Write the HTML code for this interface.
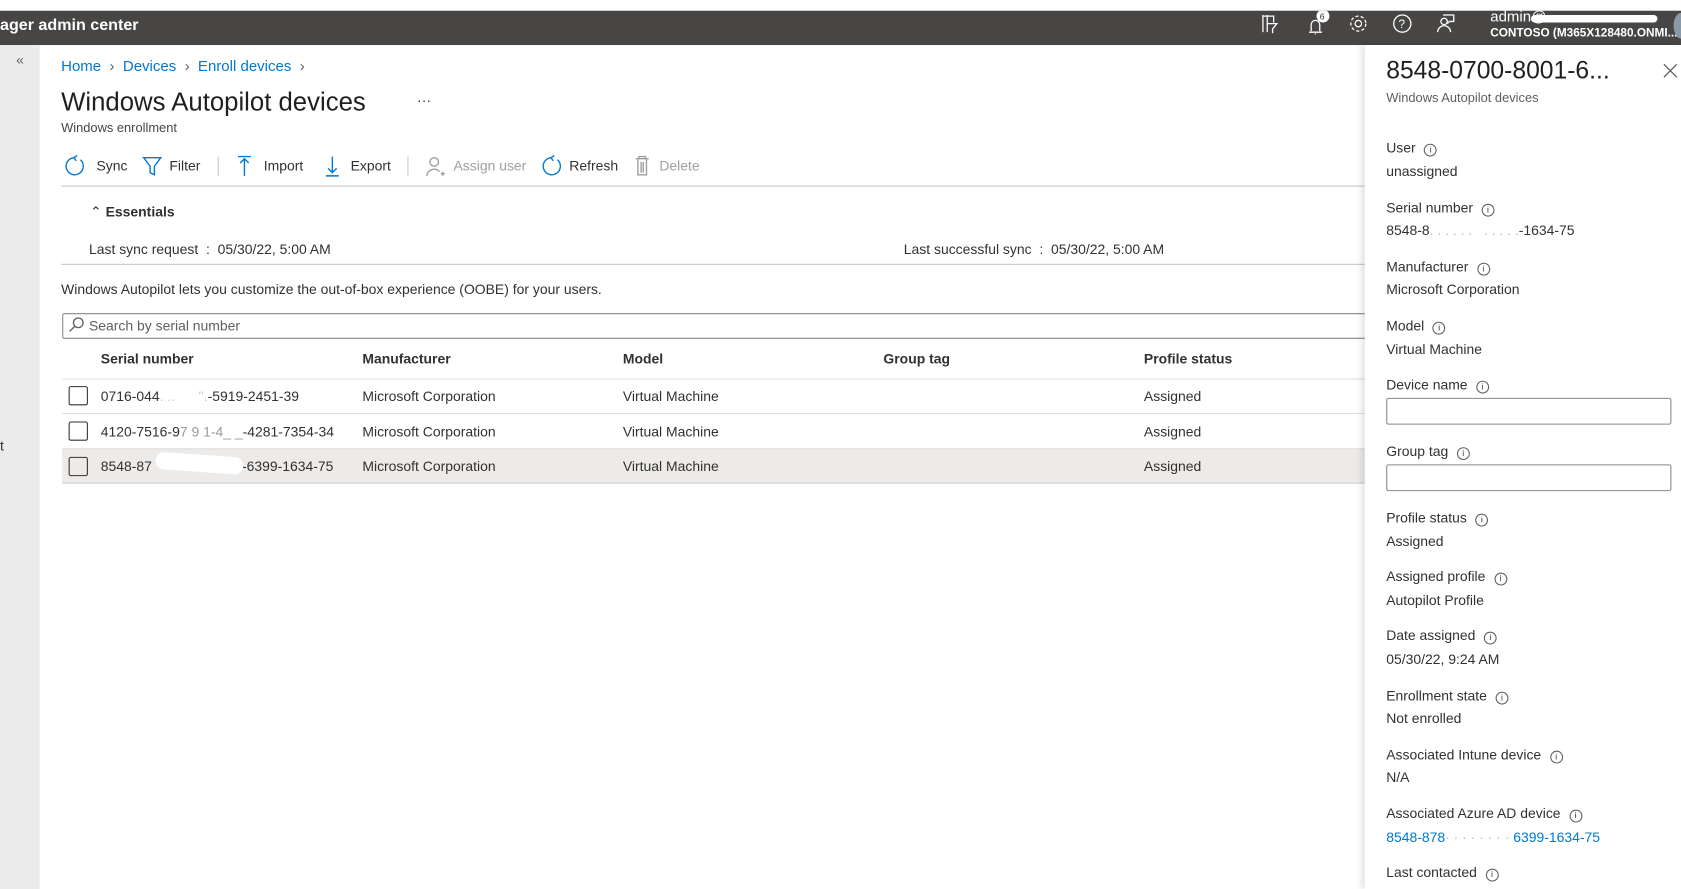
<!DOCTYPE html>
<html><head><meta charset="utf-8"><style>
*{margin:0;padding:0;box-sizing:border-box}
html,body{width:1681px;height:889px;overflow:hidden;background:#fff}
#w{position:absolute;left:0;top:0;width:1568px;height:829px;transform:scale(1.0721,1.0724);transform-origin:0 0;font-family:"Liberation Sans",sans-serif;font-size:13px;color:#323130}
.a{position:absolute;white-space:nowrap}
.l{color:#0078d4}
.g{color:#a19f9d}
.hr{position:absolute;height:1px;background:#e1dfdd}
.cb{position:absolute;left:64px;width:18px;height:18px;border:1px solid #323130;border-radius:2px}
.lab{position:absolute;left:1293px;white-space:nowrap}
.lab i{display:inline-block;width:12px;height:12px;border:1px solid #605e5c;border-radius:50%;font-style:normal;font-size:8px;line-height:10px;text-align:center;margin-left:8px;vertical-align:0px}
.in{position:absolute;left:1293px;width:266px;height:25px;border:1px solid #8a8886;border-radius:2px}
</style></head><body><div id="w">
<div class="a" style="left:0;top:10px;width:1568px;height:32px;background:#484644"></div>
<div class="a" style="left:0;top:15px;color:#fff;font-size:15px;font-weight:bold">ager admin center</div>
<svg class="a" style="left:1170px;top:10px" width="398" height="32" fill="none" stroke="#fff" stroke-width="1.2">
<path d="M8 4v16M12 4v16M8 5h10v6M12 12h9l-4 5v4"/>
<path d="M51 20h12M53 19v-6a4 4 0 0 1 8 0v6M57 21v1"/>
<circle cx="64" cy="5" r="6" fill="#fff" stroke="none"/><text x="61" y="8" font-size="8" fill="#333" stroke="none" font-family="Liberation Sans">6</text>
<circle cx="97" cy="12" r="3"/><circle cx="97" cy="12" r="7" stroke-dasharray="3 2"/>
<circle cx="138" cy="12" r="8"/><text x="134.5" y="16" font-size="11" fill="#fff" stroke="none" font-family="Liberation Sans">?</text>
<circle cx="177" cy="10" r="3"/><path d="M171 20a6 6 0 0 1 12 0M176 4h10v6h-4l-2 2"/>
</svg>
<div class="a" style="left:1390px;top:7px;color:#fff;font-size:14px">admin@</div>
<div class="a" style="left:1428px;top:14px;width:118px;height:7px;background:#fff;border-radius:4px"></div>
<div class="a" style="left:1390px;top:25px;color:#fff;font-size:11px;font-weight:bold">CONTOSO (M365X128480.ONMI...</div>
<div class="a" style="left:1561px;top:12px;width:14px;height:24px;border-radius:50%;background:#8a99a8"></div>
<div class="a" style="left:0;top:42px;width:37px;height:787px;background:#ebebeb"></div>
<div class="a" style="left:15px;top:48px;color:#605e5c;font-size:13px">«</div>
<div class="a" style="left:0;top:408px;font-size:13px">t</div>

<div class="a" style="left:57px;top:53px;font-size:14px"><span class="l">Home</span> <span style="color:#605e5c">&nbsp;›&nbsp;</span> <span class="l">Devices</span> <span style="color:#605e5c">&nbsp;›&nbsp;</span> <span class="l">Enroll devices</span> <span style="color:#605e5c">&nbsp;›</span></div>
<div class="a" style="left:57px;top:82px;font-size:24px;color:#201f1e">Windows Autopilot devices</div>
<div class="a" style="left:389px;top:86px;font-size:13px">···</div>
<div class="a" style="left:57px;top:112px;font-size:12px;color:#484644">Windows enrollment</div>

<svg class="a" style="left:60px;top:143px" width="600" height="24" fill="none" stroke="#0078d4" stroke-width="1.3">
<path d="M9 4a8 8 0 1 0 6 2M9 4l3 -2M9 4l2 3"/>
<path d="M74 4h16l-6 8v8l-4-2v-6z"/>
<path d="M162 3h12M168 6v15M164 9l4-4 4 4"/>
<path d="M250 3v15M246 14l4 4 4-4M244 21h12"/>
<path stroke="#a19f9d" d="M345 12a4 4 0 1 0 0-8a4 4 0 1 0 0 8M338 21a7 7 0 0 1 12-4M351 19h4M353 17v4"/>
<path d="M454 4a8 8 0 1 0 6 2M454 4l3 -2M454 4l2 3"/>
<path stroke="#a19f9d" d="M533 5h12M536 5v-2h6v2M535 5v15h8v-15M538 8v10M540 8v10"/>
</svg>
<div class="a" style="left:90px;top:147px;font-size:13px">Sync</div>
<div class="a" style="left:158px;top:147px">Filter</div>
<div class="a" style="left:203px;top:146px;width:1px;height:18px;background:#c8c6c4"></div>
<div class="a" style="left:246px;top:147px">Import</div>
<div class="a" style="left:327px;top:147px">Export</div>
<div class="a" style="left:380px;top:146px;width:1px;height:18px;background:#c8c6c4"></div>
<div class="a g" style="left:423px;top:147px">Assign user</div>
<div class="a" style="left:531px;top:147px">Refresh</div>
<div class="a g" style="left:615px;top:147px">Delete</div>
<div class="hr" style="left:57px;top:173px;width:1216px;background:#c8c6c4"></div>

<div class="a" style="left:84px;top:190px;font-weight:bold;font-size:13px"><span style="font-weight:normal">⌃</span> Essentials</div>
<div class="a" style="left:83px;top:225px">Last sync request &nbsp;:&nbsp; 05/30/22, 5:00 AM</div>
<div class="a" style="left:843px;top:225px">Last successful sync &nbsp;:&nbsp; 05/30/22, 5:00 AM</div>
<div class="hr" style="left:57px;top:246px;width:1216px;background:#c8c6c4"></div>
<div class="a" style="left:57px;top:262px">Windows Autopilot lets you customize the out-of-box experience (OOBE) for your users.</div>
<div class="a" style="left:58px;top:292px;width:1230px;height:24px;border:1px solid #8a8886;border-radius:2px"></div>
<svg class="a" style="left:63px;top:295px" width="16" height="16" fill="none" stroke="#605e5c" stroke-width="1.2"><circle cx="10" cy="6" r="4.5"/><path d="M7 9l-5 5"/></svg>
<div class="a" style="left:83px;top:296px;color:#605e5c">Search by serial number</div>

<div class="a" style="left:94px;top:327px;font-weight:bold">Serial number</div>
<div class="a" style="left:338px;top:327px;font-weight:bold">Manufacturer</div>
<div class="a" style="left:581px;top:327px;font-weight:bold">Model</div>
<div class="a" style="left:824px;top:327px;font-weight:bold">Group tag</div>
<div class="a" style="left:1067px;top:327px;font-weight:bold">Profile status</div>
<div class="hr" style="left:58px;top:353px;width:1215px"></div>
<div class="hr" style="left:58px;top:385px;width:1215px"></div>
<div class="a" style="left:58px;top:418px;width:1215px;height:33px;background:#edebe9;border-top:1px solid #e1dfdd;border-bottom:1px solid #d2d0ce"></div>

<div class="cb" style="top:360px"></div>
<div class="a" style="left:94px;top:362px">0716-044<span style="color:#ccc">. .. &nbsp; &nbsp; &nbsp;''.</span>-5919-2451-39</div>
<div class="a" style="left:338px;top:362px">Microsoft Corporation</div><div class="a" style="left:581px;top:362px">Virtual Machine</div><div class="a" style="left:1067px;top:362px">Assigned</div>
<div class="cb" style="top:393px"></div>
<div class="a" style="left:94px;top:395px">4120-7516-9<span style="color:#999">7 9 1-4_ _</span>-4281-7354-34</div>
<div class="a" style="left:338px;top:395px">Microsoft Corporation</div><div class="a" style="left:581px;top:395px">Virtual Machine</div><div class="a" style="left:1067px;top:395px">Assigned</div>
<div class="cb" style="top:426px"></div>
<div class="a" style="left:94px;top:427px">8548-87<span style="display:inline-block;width:84px"></span>-6399-1634-75</div>
<div class="a" style="left:145px;top:424px;width:82px;height:16px;background:#fff;border-radius:8px;transform:rotate(4deg)"></div>
<div class="a" style="left:338px;top:427px">Microsoft Corporation</div><div class="a" style="left:581px;top:427px">Virtual Machine</div><div class="a" style="left:1067px;top:427px">Assigned</div>

<div class="a" style="left:1273px;top:42px;width:295px;height:787px;background:#fff;box-shadow:-3px 0 6px rgba(0,0,0,.12)"></div>
<div class="a" style="left:1293px;top:52px;font-size:23px;color:#201f1e">8548-0700-8001-6...</div>
<svg class="a" style="left:1551px;top:59px" width="14" height="14" stroke="#605e5c" stroke-width="1.2"><path d="M1 1l12 12M13 1L1 13"/></svg>
<div class="a" style="left:1293px;top:84px;font-size:12px;color:#605e5c">Windows Autopilot devices</div>

<div class="lab" style="top:130px">User<i>i</i></div><div class="lab" style="top:152px">unassigned</div>
<div class="lab" style="top:186px">Serial number<i>i</i></div><div class="lab" style="top:207px">8548-8<span style="color:#bbb">. . . . . . &nbsp; . . . . .</span>-1634-75</div>
<div class="lab" style="top:241px">Manufacturer<i>i</i></div><div class="lab" style="top:262px">Microsoft Corporation</div>
<div class="lab" style="top:296px">Model<i>i</i></div><div class="lab" style="top:318px">Virtual Machine</div>
<div class="lab" style="top:351px">Device name<i>i</i></div><div class="in" style="top:371px"></div>
<div class="lab" style="top:413px">Group tag<i>i</i></div><div class="in" style="top:433px"></div>
<div class="lab" style="top:475px">Profile status<i>i</i></div><div class="lab" style="top:497px">Assigned</div>
<div class="lab" style="top:530px">Assigned profile<i>i</i></div><div class="lab" style="top:552px">Autopilot Profile</div>
<div class="lab" style="top:585px">Date assigned<i>i</i></div><div class="lab" style="top:607px">05/30/22, 9:24 AM</div>
<div class="lab" style="top:641px">Enrollment state<i>i</i></div><div class="lab" style="top:662px">Not enrolled</div>
<div class="lab" style="top:696px">Associated Intune device<i>i</i></div><div class="lab" style="top:717px">N/A</div>
<div class="lab" style="top:751px">Associated Azure AD device<i>i</i></div><div class="lab l" style="top:773px">8548-878<span style="color:#9cc">· · · · · · · ·</span> 6399-1634-75</div>
<div class="lab" style="top:806px">Last contacted<i>i</i></div>
</div></body></html>
